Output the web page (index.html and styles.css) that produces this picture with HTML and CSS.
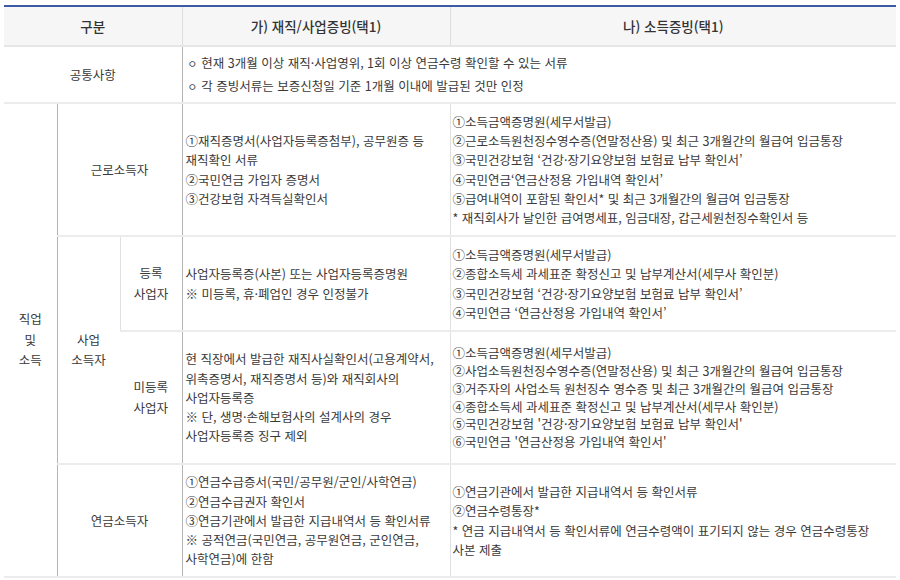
FILE: index.html
```html
<!DOCTYPE html>
<html lang="ko">
<head>
<meta charset="utf-8">
<link rel="stylesheet" href="styles.css">
</head>
<body>
<div class="wrap">
<table class="doc">
  <colgroup>
    <col class="c1"><col class="c2"><col class="c3"><col class="c4"><col class="c5">
  </colgroup>
  <thead>
    <tr class="r-head">
      <th colspan="3">구분</th>
      <th class="th-mid">가) 재직/사업증빙(택1)</th>
      <th class="th-mid">나) 소득증빙(택1)</th>
    </tr>
  </thead>
  <tbody>
    <tr class="r-common">
      <td colspan="3" class="label">공통사항</td>
      <td colspan="2" class="txt common dark-left"><span class="bullet">ㅇ</span>현재 3개월 이상 재직·사업영위, 1회 이상 연금수령 확인할 수 있는 서류<br><span class="bullet">ㅇ</span>각 증빙서류는 보증신청일 기준 1개월 이내에 발급된 것만 인정</td>
    </tr>
    <tr class="r-work">
      <td rowspan="4" class="label lh-big">직업<br>및<br>소득</td>
      <td colspan="2" class="label dark-left">근로소득자</td>
      <td class="txt a dark-left">①재직증명서(사업자등록증첨부), 공무원증 등<br>재직확인 서류<br>②국민연금 가입자 증명서<br>③건강보험 자격득실확인서</td>
      <td class="txt b">①소득금액증명원(세무서발급)<br>②근로소득원천징수영수증(연말정산용) 및 최근 3개월간의 월급여 입금통장<br>③국민건강보험 ‘건강·장기요양보험 보험료 납부 확인서’<br>④국민연금‘연금산정용 가입내역 확인서’<br>⑤급여내역이 포함된 확인서* 및 최근 3개월간의 월급여 입금통장<br>* 재직회사가 날인한 급여명세표, 임금대장, 갑근세원천징수확인서 등</td>
    </tr>
    <tr class="r-reg">
      <td rowspan="2" class="label lh-big dark-left">사업<br>소득자</td>
      <td class="label lh-big">등록<br>사업자</td>
      <td class="txt a dark-left">사업자등록증(사본) 또는 사업자등록증명원<br>※ 미등록, 휴·폐업인 경우 인정불가</td>
      <td class="txt b">①소득금액증명원(세무서발급)<br>②종합소득세 과세표준 확정신고 및 납부계산서(세무사 확인분)<br>③국민건강보험 ‘건강·장기요양보험 보험료 납부 확인서’<br>④국민연금 ‘연금산정용 가입내역 확인서’</td>
    </tr>
    <tr class="r-unreg">
      <td class="label lh-big">미등록<br>사업자</td>
      <td class="txt a dark-left">현 직장에서 발급한 재직사실확인서(고용계약서,<br>위촉증명서, 재직증명서 등)와 재직회사의<br>사업자등록증<br>※ 단, 생명·손해보험사의 설계사의 경우<br>사업자등록증 징구 제외</td>
      <td class="txt b tight">①소득금액증명원(세무서발급)<br>②사업소득원천징수영수증(연말정산용) 및 최근 3개월간의 월급여 입금통장<br>③거주자의 사업소득 원천징수 영수증 및 최근 3개월간의 월급여 입금통장<br>④종합소득세 과세표준 확정신고 및 납부계산서(세무사 확인분)<br>⑤국민건강보험 '건강·장기요양보험 보험료 납부 확인서'<br>⑥국민연금 '연금산정용 가입내역 확인서'</td>
    </tr>
    <tr class="r-pension">
      <td colspan="2" class="label dark-left">연금소득자</td>
      <td class="txt a dark-left">①연금수급증서(국민/공무원/군인/사학연금)<br>②연금수급권자 확인서<br>③연금기관에서 발급한 지급내역서 등 확인서류<br>※ 공적연금(국민연금, 공무원연금, 군인연금,<br>사학연금)에 한함</td>
      <td class="txt b">①연금기관에서 발급한 지급내역서 등 확인서류<br>②연금수령통장*<br>* 연금 지급내역서 등 확인서류에 연금수령액이 표기되지 않는 경우 연금수령통장<br>사본 제출</td>
    </tr>
  </tbody>
</table>
</div>
</body>
</html>
```

FILE: styles.css
```css
html, body {
  margin: 0;
  padding: 0;
  background: #ffffff;
}

.wrap {
  padding: 5px 4px 0 4px;
}

.doc {
  width: 892px;
  border-collapse: collapse;
  table-layout: fixed;
  font-family: "Noto Sans CJK KR", "Noto Sans", sans-serif;
  font-size: 12.5px;
  color: #3a3a3a;
  border-top: 2px solid #3d5aa6;
}

.c1 { width: 53px; }
.c2 { width: 63px; }
.c3 { width: 62px; }
.c4 { width: 268px; }
.c5 { width: 446px; }

.doc th {
  background: #f6f6f6;
  color: #333333;
  font-weight: 500;
  font-size: 13.5px;
  height: 38px;
  padding: 0;
  border-bottom: 2px solid #e6e6e6;
  text-align: center;
  vertical-align: middle;
}

.doc th.th-mid {
  border-left: 1px solid #dddddd;
}

.doc td {
  padding: 0;
  vertical-align: middle;
  border-bottom: 2px solid #ececec;
  border-left: 1px solid #e0e0e0;
}

.doc td:first-child {
  border-left: none;
}

.doc td.dark-left {
  border-left: 1px solid #b4b4b4;
}

.label {
  text-align: center;
  line-height: 20px;
}

.lh-big {
  line-height: 20.5px;
}

.txt {
  text-align: left;
  line-height: 19.2px;
  white-space: nowrap;
}

.txt.a {
  padding-left: 3px;
}

.txt.b {
  padding-left: 2px;
}

.txt.tight {
  line-height: 17.9px;
}

.txt.common {
  padding-left: 5px;
  line-height: 22px;
}

.bullet {
  display: inline-block;
  font-size: 10.5px;
  margin-right: 4px;
  vertical-align: 0;
}

.r-common { height: 57px; }
.r-work { height: 133px; }
.r-reg { height: 95px; }
.r-unreg { height: 133px; }
.r-pension { height: 113px; }
```
